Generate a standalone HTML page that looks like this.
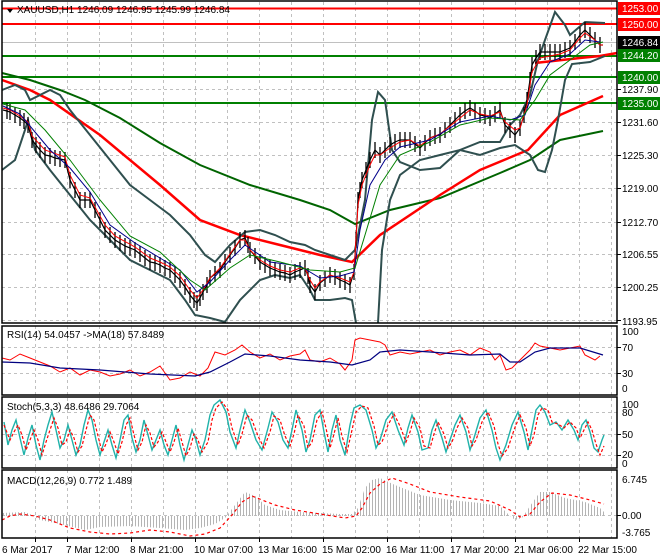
<!DOCTYPE html>
<html><head><meta charset="utf-8"><style>
html,body{margin:0;padding:0;background:#fff;width:660px;height:560px;overflow:hidden}
svg{display:block;font-family:"Liberation Sans",sans-serif;font-size:10px}
</style></head><body>
<svg width="660" height="560" viewBox="0 0 660 560" xmlns="http://www.w3.org/2000/svg">
<defs>
<pattern id="hb" width="3" height="10" patternUnits="userSpaceOnUse"><rect x="0" y="0" width="1" height="10" fill="#b4b4b4"/></pattern>
<marker id="cd" markerUnits="userSpaceOnUse" markerWidth="4" markerHeight="20" refX="2" refY="10" viewBox="0 0 4 20"><path d="M2 2V18" stroke="#000" stroke-width="1.3"/></marker>
</defs>
<rect width="660" height="560" fill="#fff"/>
<g stroke="#c0c0c0" stroke-dasharray="3,3" stroke-width="1">
<path d="M35.5 2V538M67.5 2V538M99.5 2V538M131.5 2V538M163.5 2V538M195.5 2V538M227.5 2V538M259.5 2V538M291.5 2V538M323.5 2V538M355.5 2V538M387.5 2V538M419.5 2V538M451.5 2V538M483.5 2V538M515.5 2V538M547.5 2V538M579.5 2V538M611.5 2V538"/>
<path d="M2 24.5H617M2 56.5H617M2 89.5H617M2 122.5H617M2 155.5H617M2 188.5H617M2 222.5H617M2 254.5H617M2 287.5H617M2 320.5H617"/>
<path d="M2 347.5H617M2 373.5H617M2 412.5H617M2 434.5H617M2 455.5H617M2 515.5H617"/>
</g>
<path d="M2 42.5H617" stroke="#c0c0c0"/>
<path d="M2 8.5H617M2 24H617" stroke="#ff0000" stroke-width="2"/>
<path d="M2 56H617M2 77H617M2 103H617" stroke="#008000" stroke-width="2"/>
<path d="M2 73L30 80L60 90L85 100L120 118L160 143L200 165L250 185L300 200L330 210L355 224L390 210L440 198L500 173L530 160L560 140L603 131" fill="none" stroke="#006400" stroke-width="2"/>
<path d="M2 80L30 90L50 100L100 135L160 185L200 220L240 235L280 245L320 255L352 262L380 235L440 195L480 170L528 150L560 115L603 96" fill="none" stroke="#ff0000" stroke-width="2.5"/>
<path d="M535 63L580 58L600 56L617 53" fill="none" stroke="#ff0000" stroke-width="2.5"/>
<g fill="none" stroke="#2f4f4f" stroke-width="2">
<path d="M2 90L15 85L25 90L30 100L50 90L60 95L70 110L90 135L110 160L130 185L150 200L170 215L190 235L205 255L215 262L230 245L245 232L260 230L275 235L290 242L305 245L315 250L330 255L345 260L355 250L365 200L372 120L378 92L385 100L392 150L400 162L420 170L440 168L460 150L480 142L500 142L510 125L520 115L530 95L538 60L545 40L555 12L565 25L570 35L585 22L605 23"/>
<path d="M2 170L15 160L25 130L28 120L35 150L50 170L70 195L90 220L110 240L130 260L150 270L170 280L185 300L195 315L210 318L225 322L240 300L260 280L275 275L290 278L300 275L310 290L315 300L330 300L345 298L352 300L356 323M378 323L382 250L390 200L400 175L420 160L440 155L460 150L480 155L500 148L515 145L530 155L538 170L545 172L552 150L558 120L565 80L572 64L590 62L605 56"/>
</g>
<path d="M3 110L7 111L10 112L15 115L20 118L24 121L28 125L32 140L36 145L40 150L45 155L50 156L55 158L60 159L65 160L70 180L75 190L80 200L85 200L90 200L95 210L100 220L105 230L110 235L115 240L120 243L125 246L130 248L135 250L140 254L145 258L150 262L155 263L160 265L165 268L170 270L175 275L180 280L185 287L190 295L194 300L197 303L200 298L203 292L207 285L210 278L215 274L220 270L225 262L230 255L235 248L240 240L245 238L248 245L250 250L255 256L260 262L265 265L270 268L275 270L280 272L285 273L290 275L295 272L300 270L305 268L308 276L310 285L315 292L320 283L325 279L330 275L335 277L340 280L345 282L350 285L354 272L356 240L358 200L360 190L362 180L366 170L370 160L375 150L380 155L385 150L390 145L395 142L400 140L405 140L410 140L415 144L420 148L425 143L430 138L435 136L440 135L445 130L450 125L455 120L460 115L465 111L470 108L475 111L480 115L485 116L490 118L495 114L500 110L505 125L510 130L515 135L520 128L524 115L527 100L530 80L532 65L536 58L540 52L545 52L550 52L555 52L560 52L565 50L570 48L575 42L580 35L585 30L590 35L595 40L600 45L603 45" fill="none" stroke="#000" stroke-width="1.2" marker-mid="url(#cd)"/>
<path d="M3 108L10 110L20 116L28 122L32 136L45 150L65 157L70 175L80 195L90 198L105 225L115 236L135 247L150 258L160 262L170 267L180 276L190 290L197 298L203 290L210 278L220 268L230 254L240 240L245 240L250 250L260 260L270 266L280 270L290 272L300 268L305 268L310 280L315 288L320 282L330 275L340 278L350 282L354 272L358 205L362 185L370 165L375 155L380 155L390 148L400 142L410 140L420 146L430 138L440 134L460 118L470 110L480 114L490 116L500 112L505 122L515 130L520 128L527 105L532 72L540 58L560 54L570 50L580 38L585 33L595 40L600 45L603 45" fill="none" stroke="#ff0000" stroke-width="1"/>
<path d="M3 106L20 114L35 132L50 150L70 168L90 192L110 225L135 243L160 258L180 270L197 292L210 282L230 260L245 245L270 262L300 266L320 278L340 276L354 272L360 230L370 185L385 160L400 147L430 140L460 122L490 116L510 120L525 115L535 85L550 62L570 54L585 40L600 42" fill="none" stroke="#00008b" stroke-width="1"/>
<path d="M3 104L25 110L45 130L70 160L100 200L130 236L160 252L190 280L205 290L230 268L250 255L280 262L310 270L340 272L355 268L365 235L380 185L400 155L430 142L460 125L490 118L520 120L535 100L550 75L570 60L590 45L603 42" fill="none" stroke="#008000" stroke-width="1"/>
<path d="M2 358L10 360L20 354L30 358L40 362L50 366L60 372L70 368L80 375L90 370L100 372L110 376L120 374L130 370L140 376L150 372L160 366L170 380L180 378L190 372L200 376L208 368L215 352L225 355L235 350L242 345L250 352L260 358L270 354L280 360L290 356L300 354L305 350L310 360L320 362L330 358L340 364L345 370L352 360L355 340L360 338L370 340L380 342L385 345L390 355L400 352L410 354L420 352L430 350L440 355L450 352L460 350L470 355L480 348L490 352L495 360L500 355L506 370L512 368L520 360L530 350L535 343L540 346L550 348L560 350L570 348L580 346L585 355L595 360L600 356" fill="none" stroke="#ff0000" stroke-width="1"/>
<path d="M2 362L30 363L60 368L100 370L150 374L195 376L210 372L230 362L245 354L270 356L300 360L330 362L352 365L370 360L380 352L400 350L430 352L470 355L500 354L510 362L520 362L535 352L550 348L580 348L603 355" fill="none" stroke="#000080" stroke-width="1.2"/>
<path d="M4 422L8 445L12 430L16 420L20 438L24 455L28 438L32 425L36 445L40 460L44 440L48 425L52 412L56 430L60 448L64 440L68 425L72 440L76 455L80 445L84 425L88 410L92 420L96 440L100 455L104 442L108 430L112 445L116 458L120 440L124 420L128 415L132 438L136 452L140 440L144 420L148 435L152 450L156 440L160 430L164 445L168 455L172 440L176 425L180 445L184 460L188 445L192 430L196 440L200 455L205 440L210 415L214 405L220 400L226 412L230 432L236 448L240 430L245 410L250 422L256 440L262 450L268 428L272 412L278 422L283 440L288 448L292 430L296 410L302 430L306 452L310 440L315 415L320 410L324 432L328 452L332 430L336 415L340 440L345 455L350 425L354 408L360 405L366 410L372 430L376 448L380 440L386 420L392 412L398 430L404 445L408 428L412 415L418 432L422 450L428 448L432 430L436 420L442 438L446 452L450 440L455 425L460 415L466 432L470 450L474 438L480 418L486 410L492 430L496 448L500 460L506 445L512 425L518 412L524 432L528 450L532 430L536 410L540 405L545 412L550 425L556 422L562 430L568 420L574 430L578 440L582 425L586 420L590 432L594 448L598 452L602 440L604 435" fill="none" stroke="#20b2aa" stroke-width="1.4"/>
<path d="M4 425L10 440L14 432L18 425L22 435L26 450L30 440L34 430L38 440L42 455L46 442L50 430L54 418L58 428L62 445L66 442L70 430L74 438L78 452L82 446L86 430L90 415L94 420L98 436L102 452L106 444L110 432L114 442L118 454L122 442L126 425L130 418L134 435L138 450L142 442L146 425L150 433L154 447L158 442L162 432L166 442L170 452L174 442L178 428L182 442L186 456L190 448L194 434L198 440L202 452L208 442L212 420L216 408L222 402L228 410L232 428L238 445L242 434L247 415L252 420L258 436L264 448L270 432L274 416L280 420L285 436L290 446L294 434L298 415L304 426L308 448L312 442L317 420L322 412L326 428L330 448L334 434L338 418L342 436L347 452L352 430L356 412L362 406L368 408L374 426L378 445L382 442L388 425L394 414L400 426L406 442L410 432L414 418L420 428L424 446L430 448L434 434L438 422L444 434L448 448L452 442L457 428L462 418L468 428L472 446L476 440L482 422L488 412L494 426L498 444L502 456L508 448L514 430L520 415L526 428L530 446L534 435L538 415L542 408L548 410L552 422L558 424L564 428L570 422L576 428L580 438L584 430L588 422L592 430L596 444L600 455L604 446" fill="none" stroke="#ff0000" stroke-width="1.2" stroke-dasharray="3,2"/>
<path d="M2 516L2 513L25 512L30 514L40 520L60 524L85 530L100 527L130 526L160 528L185 530L200 528L215 524L225 518L235 505L245 492L255 496L265 505L280 510L300 512L320 513L340 514L352 514L358 508L365 488L372 480L380 478L395 485L420 495L450 500L480 503L500 506L508 514L515 520L522 518L530 506L540 492L550 492L565 498L585 502L600 508L604 512L604 516Z" fill="url(#hb)"/>
<path d="M2 520L10 516L20 514L35 516L50 520L70 528L90 532L110 534L130 533L150 530L170 532L190 536L205 534L220 528L232 515L242 502L252 496L262 500L275 505L295 510L320 514L345 518L356 516L362 508L370 493L380 484L392 478L410 484L430 492L460 497L490 501L510 510L520 517L530 514L540 502L552 493L570 495L590 500L604 504" fill="none" stroke="#ff0000" stroke-width="1.2" stroke-dasharray="3,3"/>
<g fill="none" stroke="#000" stroke-width="1.5">
<rect x="2" y="1" width="615" height="322"/>
<rect x="2" y="326" width="615" height="69"/>
<rect x="2" y="397" width="615" height="71"/>
<rect x="2" y="470" width="615" height="68"/>
</g>
<g stroke="#000"><path d="M617 89.5h4M617 122.5h4M617 155.5h4M617 188.5h4M617 222.5h4M617 254.5h4M617 287.5h4M617 320.5h4M617 347.5h4M617 373.5h4M617 434.5h4M617 455.5h4M617 515.5h4"/>
<path d="M35.5 538v4M67.5 538v4M131.5 538v4M195.5 538v4M259.5 538v4M323.5 538v4M387.5 538v4M451.5 538v4M515.5 538v4M579.5 538v4"/></g>
<rect x="618" y="2" width="42" height="13" fill="#ff0000"/><text x="622" y="12" fill="#fff">1253.00</text>
<rect x="618" y="18" width="42" height="13" fill="#ff0000"/><text x="622" y="28" fill="#fff">1250.00</text>
<rect x="618" y="36" width="42" height="13" fill="#000"/><text x="622" y="46" fill="#fff">1246.84</text>
<rect x="618" y="49" width="42" height="13" fill="#008000"/><text x="622" y="59" fill="#fff">1244.20</text>
<rect x="618" y="71" width="42" height="13" fill="#008000"/><text x="622" y="81" fill="#fff">1240.00</text>
<rect x="618" y="97" width="42" height="13" fill="#008000"/><text x="622" y="107" fill="#fff">1235.00</text>
<g fill="#000">
<text x="622" y="93">1237.90</text>
<text x="622" y="126">1231.60</text>
<text x="622" y="159">1225.30</text>
<text x="622" y="192">1219.00</text>
<text x="622" y="226">1212.70</text>
<text x="622" y="258">1206.55</text>
<text x="622" y="291">1200.25</text>
<text x="622" y="325">1193.95</text>
<text x="622" y="335">100</text>
<text x="622" y="351">70</text>
<text x="622" y="377">30</text>
<text x="622" y="392">0</text>
<text x="622" y="408">100</text>
<text x="622" y="416">80</text>
<text x="622" y="438">50</text>
<text x="622" y="458">20</text>
<text x="622" y="467">0</text>
<text x="622" y="483">6.745</text>
<text x="622" y="519">0.00</text>
<text x="622" y="536">-3.765</text>
<text x="2" y="553">6 Mar 2017</text>
<text x="66" y="553">7 Mar 12:00</text>
<text x="130" y="553">8 Mar 21:00</text>
<text x="194" y="553">10 Mar 07:00</text>
<text x="258" y="553">13 Mar 16:00</text>
<text x="322" y="553">15 Mar 02:00</text>
<text x="386" y="553">16 Mar 11:00</text>
<text x="450" y="553">17 Mar 20:00</text>
<text x="514" y="553">21 Mar 06:00</text>
<text x="578" y="553">22 Mar 15:00</text>
<path d="M7 9l6 0l-3 4z"/>
<text x="17" y="13">XAUUSD,H1  1246.09 1246.95 1245.99 1246.84</text>
<text x="7" y="338">RSI(14) 54.0457  -&gt;MA(18) 57.8489</text>
<text x="7" y="410">Stoch(5,3,3) 48.6486 29.7064</text>
<text x="7" y="484">MACD(12,26,9) 0.772 1.489</text>
</g>
</svg>
</body></html>
